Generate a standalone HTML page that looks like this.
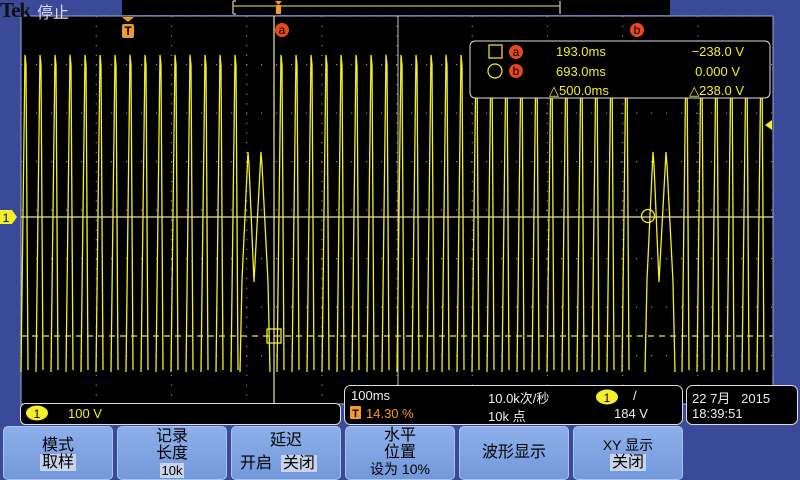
<!DOCTYPE html>
<html><head><meta charset="utf-8">
<style>
*{margin:0;padding:0;box-sizing:border-box}
body{width:800px;height:480px;background:#3b4a98;position:relative;overflow:hidden;font-family:"Liberation Sans","Noto Sans CJK SC",sans-serif;}
.abs{position:absolute}
#scope{left:0;top:0}
.btn{position:absolute;top:426px;height:54px;width:110px;background:linear-gradient(#8db0ea,#7398da);border:1px solid #a9c3f0;border-radius:5px;color:#000;font-size:16px;text-align:center;line-height:17px;font-family:"Liberation Sans","WenQuanYi Zen Hei",sans-serif}
.hl{background:#c9d3ea;padding:0 2px}
.y{color:#f5f03a}
.o{color:#f39a2a}
.w{color:#eee}
.txt{position:absolute;font-size:13px;font-family:"Liberation Sans","Noto Sans CJK SC",sans-serif;white-space:nowrap}
</style></head><body>
<svg id="scope" class="abs" width="800" height="480" xmlns="http://www.w3.org/2000/svg">
  <rect x="21" y="16" width="752" height="388" fill="#000"/>
  <rect x="21" y="16" width="752" height="388" fill="none" stroke="#9fb0e0" stroke-width="1"/>
  <g id="grid" fill="#8a8a8a"></g>
  <line x1="398" y1="16" x2="398" y2="404" stroke="#bbb" stroke-width="1"/>
  <path id="wave" fill="none" stroke="#f3ef2c" stroke-width="1.3"/>
  <line x1="21" y1="217" x2="773" y2="217" stroke="#e8e0a0" stroke-width="1.2"/>
  <line x1="21" y1="336" x2="773" y2="336" stroke="#e8e070" stroke-width="1.2" stroke-dasharray="6,5"/>
  <line x1="274" y1="16" x2="274" y2="404" stroke="#f0ec90" stroke-width="1.2"/>
  <rect x="267" y="329" width="14" height="14" fill="none" stroke="#f3ef2c" stroke-width="1.3"/>
  <circle cx="648" cy="216" r="6.5" fill="none" stroke="#f3ef2c" stroke-width="1.3"/>
  <!-- top bar -->
  <rect x="122" y="0" width="548" height="15" fill="#000"/>
  <line x1="233" y1="6" x2="560" y2="6" stroke="#f0ec60" stroke-width="1"/>
  <path d="M233,1 V14 M233,1 h3 M233,14 h3" stroke="#aaa" stroke-width="1.5" fill="none"/>
  <path d="M560,1 V14" stroke="#aaa" stroke-width="1.5"/>
  <path d="M275,1 h7 l-3.5,4z" fill="#f39a2a"/>
  <rect x="276" y="5" width="5" height="9" fill="#f39a2a"/>
  <!-- T marker -->
  <path d="M122,17 h12 l-6,5z" fill="#f39a2a"/>
  <rect x="122" y="24" width="12" height="14" rx="2" fill="#f39a2a"/>
  <text x="128" y="35" font-size="12" font-weight="bold" text-anchor="middle" font-family="Liberation Sans">T</text>
  <circle cx="282" cy="30" r="7" fill="#e8481c"/>
  <text x="282" y="34" font-size="12" text-anchor="middle" fill="#000" font-family="Liberation Sans">a</text>
  <circle cx="637" cy="30" r="7" fill="#e8481c"/>
  <text x="637" y="34" font-size="12" text-anchor="middle" fill="#000" font-family="Liberation Sans">b</text>
  <!-- ch1 marker -->
  <path d="M0,210 h12 l5,7 l-5,7 h-12z" fill="#f3ef2c"/>
  <text x="6" y="222" font-size="12" font-family="Liberation Sans" text-anchor="middle">1</text>
  <path d="M765,125 l7,-5 v10z" fill="#f3ef2c"/>
  <!-- cursor readout box -->
  <rect x="470" y="41" width="300" height="57" rx="5" fill="#000" stroke="#ddd" stroke-width="1"/>
  <rect x="489" y="45" width="13" height="13" fill="none" stroke="#f3ef2c" stroke-width="1.2"/>
  <circle cx="495" cy="71" r="7" fill="none" stroke="#f3ef2c" stroke-width="1.2"/>
  <circle cx="516" cy="52" r="7" fill="#e8481c"/>
  <text x="516" y="56" font-size="12" text-anchor="middle" font-family="Liberation Sans">a</text>
  <circle cx="516" cy="71" r="7" fill="#e8481c"/>
  <text x="516" y="75" font-size="12" text-anchor="middle" font-family="Liberation Sans">b</text>
  <g fill="#f3ef2c" font-size="13" font-family="Liberation Sans">
    <text x="556" y="56">193.0ms</text>
    <text x="556" y="76">693.0ms</text>
    <text x="549" y="95">△500.0ms</text>
    <text x="744" y="56" text-anchor="end">−238.0 V</text>
    <text x="740" y="76" text-anchor="end">0.000 V</text>
    <text x="744" y="95" text-anchor="end">△238.0 V</text>
  </g>
  <!-- bottom info boxes -->
  <rect x="20.5" y="403.5" width="320" height="21" rx="5" fill="#000" stroke="#ddd"/>
  <ellipse cx="37" cy="413" rx="11" ry="7.5" fill="#f3ef2c"/>
  <text x="37" y="418" font-size="12" text-anchor="middle" font-family="Liberation Sans">1</text>
  <text x="68" y="418" font-size="13" fill="#f3ef2c" font-family="Liberation Sans">100 V</text>
  <rect x="344.5" y="385.5" width="338" height="39" rx="6" fill="#000" stroke="#ddd"/>
  <rect x="686.5" y="385.5" width="111" height="39" rx="6" fill="#000" stroke="#ddd"/>
  <rect x="350" y="406" width="11" height="13" rx="1" fill="#f39a2a"/>
  <text x="355.5" y="417" font-size="11" font-weight="bold" text-anchor="middle" font-family="Liberation Sans">T</text>
  <ellipse cx="607" cy="397" rx="11" ry="7.5" fill="#f3ef2c"/>
  <text x="607" y="402" font-size="12" text-anchor="middle" font-family="Liberation Sans">1</text>
</svg>
<div class="txt w" style="left:0;top:-2px;font-size:21px;font-family:'Liberation Serif',serif;color:#111;font-weight:bold;letter-spacing:-1px">Tek</div>
<div class="txt w" style="left:37px;top:-1px;font-size:16px;color:#dde">停止</div>
<div class="txt w" style="left:351px;top:388px">100ms</div>
<div class="txt o" style="left:366px;top:406px">14.30 %</div>
<div class="txt w" style="left:488px;top:388px">10.0k次/秒</div>
<div class="txt w" style="left:488px;top:406px">10k 点</div>
<div class="txt w" style="left:633px;top:388px">/</div>
<div class="txt w" style="left:614px;top:406px">184 V</div>
<div class="txt w" style="left:692px;top:388px">22 7月 &nbsp;&nbsp;2015</div>
<div class="txt w" style="left:692px;top:406px">18:39:51</div>

<div class="btn" style="left:3px"><div style="margin-top:10px">模式</div><span class="hl">取样</span></div>
<div class="btn" style="left:117px"><div style="margin-top:1px">记录</div><div>长度</div><span class="hl" style="font-size:13px">10k</span></div>
<div class="btn" style="left:231px"><div style="margin-top:5px">延迟</div><div style="text-align:left;padding-left:8px;margin-top:6px">开启 &nbsp;<span class="hl">关闭</span></div></div>
<div class="btn" style="left:345px"><div style="margin-top:0px">水平</div><div>位置</div><div style="font-size:14px">设为 10%</div></div>
<div class="btn" style="left:459px"><div style="margin-top:17px">波形显示</div></div>
<div class="btn" style="left:573px"><div style="margin-top:10px;font-size:14px">XY 显示</div><span class="hl">关闭</span></div>

<script>
(function(){
  var g=document.getElementById('grid'),s='';
  for(var i=0;i<=10;i++){var x=21+i*75.2;
    for(var y=16;y<=404;y+=9.7){s+='<rect x="'+(x-0.5)+'" y="'+y.toFixed(1)+'" width="1.2" height="1.2"/>';}}
  for(var j=0;j<=8;j++){var yy=16+j*48.5;
    for(var x2=21;x2<=773;x2+=15){s+='<rect x="'+x2+'" y="'+(yy-0.5).toFixed(1)+'" width="1.2" height="1.2"/>';}}
  g.innerHTML=s;
  var d='',P=15,T=55,B=372;
  function cyc(x){return 'M'+(x-1)+','+B+' L'+(x+3)+','+T+' L'+(x+4)+','+(T+10)+' L'+(x+6)+','+(B-2)+' ';}
  function dist(x0){
    return 'M'+x0+','+B+' L'+(x0+2)+',280 L'+(x0+8)+',152 L'+(x0+9)+',165 L'+(x0+14)+',282 L'+(x0+21)+',152 L'+(x0+22)+',165 L'+(x0+28)+',282 L'+(x0+30)+','+B+' ';}
  for(var x=22;x<238;x+=P) d+=cyc(x);
  d+=dist(240);
  for(var x=278;x<638;x+=P) d+=cyc(x);
  d+=dist(645);
  for(var x=683;x<766;x+=P) d+=cyc(x);
  document.getElementById('wave').setAttribute('d',d);
})();
</script>
</body></html>
